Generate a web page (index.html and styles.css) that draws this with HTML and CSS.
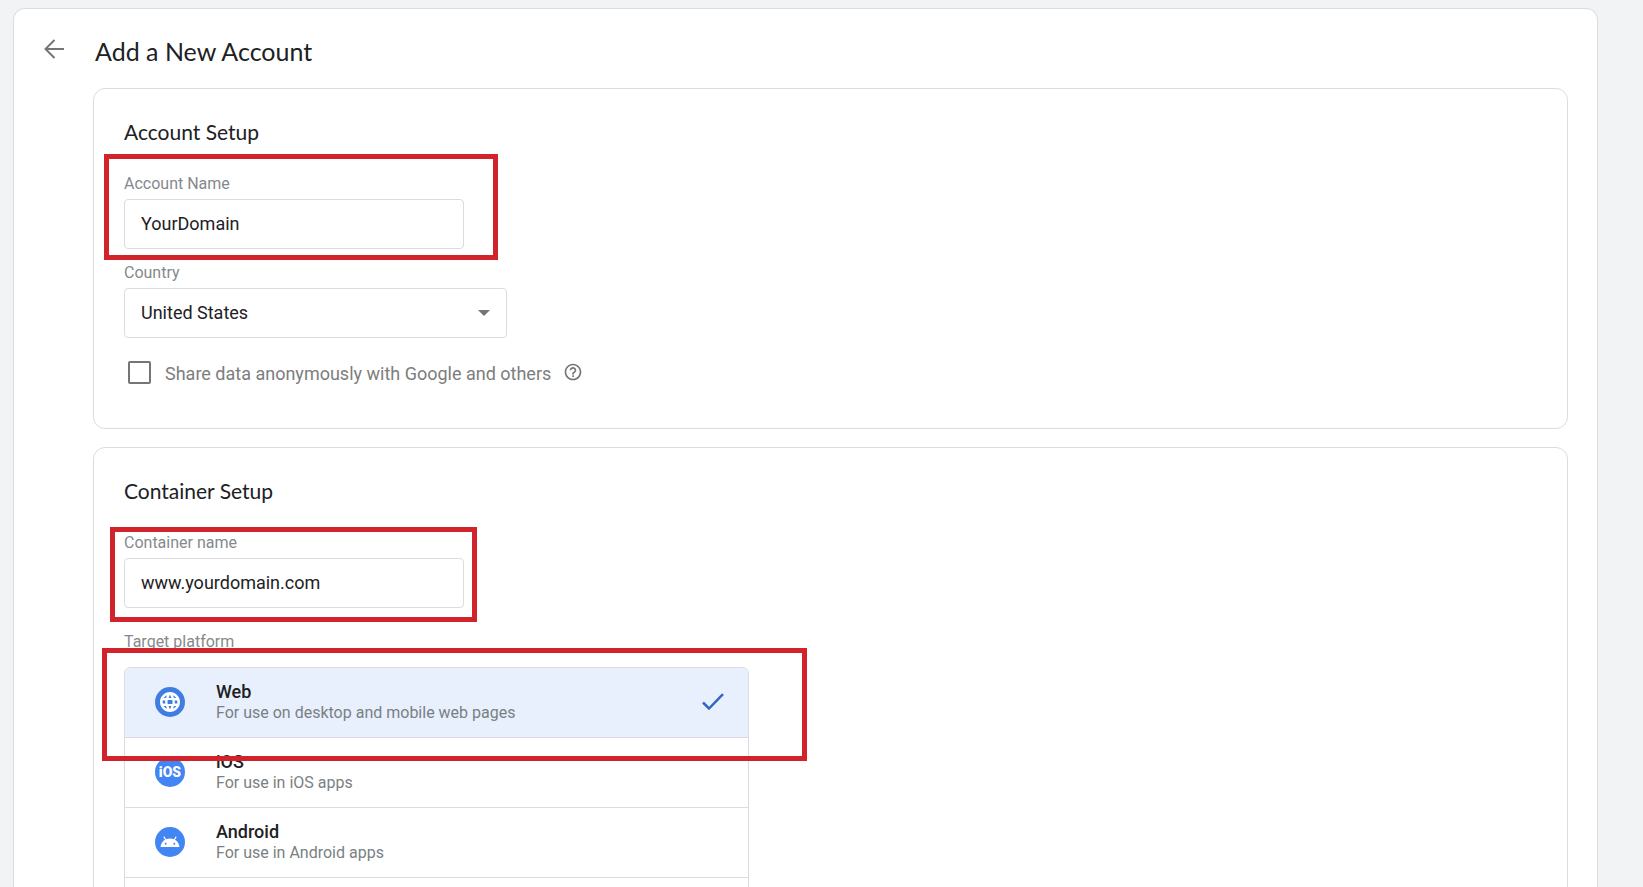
FILE: index.html
```html
<!DOCTYPE html>
<html lang="en">
<head>
  <meta charset="UTF-8">
  <meta name="viewport" content="width=device-width, initial-scale=1.0">
  <title>Add a New Account</title>
  <link rel="stylesheet" href="styles.css">
</head>
<body>
  <main class="panel">
    <header class="page-header">
      <button type="button" class="back-button" aria-label="Back">
        <svg width="20" height="20" viewBox="0 0 20 20" fill="none" stroke="currentColor" stroke-width="2">
          <path d="M20 10H2M10.5 1L1.5 10l9 9"/>
        </svg>
      </button>
      <h1>Add a New Account</h1>
    </header>
    <form class="cards">
      <section class="card">
        <h2>Account Setup</h2>
        <div class="field">
          <label for="account-name">Account Name</label>
          <input type="text" id="account-name" value="YourDomain">
          <span class="highlight highlight-account"></span>
        </div>
        <div class="field field-wide">
          <label for="country">Country</label>
          <div class="select-wrap">
            <select id="country">
              <option>United States</option>
            </select>
            <svg class="caret" width="12" height="6" viewBox="0 0 12 6"><path d="M0 0h12L6 6z" fill="currentColor"/></svg>
          </div>
        </div>
        <div class="share">
          <input type="checkbox" id="share-data">
          <label for="share-data">Share data anonymously with Google and others</label>
          <button type="button" class="help-button" aria-label="Help">
            <svg width="20" height="20" viewBox="0 0 24 24" fill="currentColor">
              <path d="M11 18h2v-2h-2v2zm1-16C6.48 2 2 6.48 2 12s4.480 10 10 10 10-4.480 10-10S17.520 2 12 2zm0 18c-4.410 0-8-3.590-8-8s3.590-8 8-8 8 3.590 8 8-3.590 8-8 8zm0-14c-2.210 0-4 1.790-4 4h2c0-1.100.9-2 2-2s2 .9 2 2c0 2-3 1.750-3 5h2c0-2.250 3-2.500 3-5 0-2.210-1.790-4-4-4z"/>
            </svg>
          </button>
        </div>
      </section>
      <section class="card">
        <h2>Container Setup</h2>
        <div class="field">
          <label for="container-name">Container name</label>
          <input type="text" id="container-name" value="www.yourdomain.com">
          <span class="highlight highlight-container"></span>
        </div>
        <div class="platforms">
          <p class="platforms-label" id="platform-label">Target platform</p>
          <div class="platform-list" role="group" aria-labelledby="platform-label">
            <button type="button" class="platform selected">
              <svg class="platform-icon" width="30" height="30" viewBox="0 0 30 30">
                <circle cx="15" cy="15" r="15" fill="#3f7de0"/>
                <path transform="translate(3 3)" fill="#fff" d="M11.990 2C6.470 2 2 6.480 2 12s4.470 10 9.990 10C17.520 22 22 17.520 22 12S17.520 2 11.990 2zm6.430 6h-2.450c-.32-1.250-.6-1.950-1.100-2.860 1.500.63 2.650 1.600 3.550 2.860zM12 4.840c.6 1 1 1.900 1.310 3.160h-2.620c.31-1.260.71-2.160 1.310-3.160zM4.860 13.600C4.700 13 4.700 12.600 4.700 12s0-1 .16-1.600h2.480c-.08.66-.14 1.000-.14 1.600s.06.94.14 1.600H4.860zm.72 2.400h2.450c.32 1.250.6 1.950 1.100 2.860-1.500-.63-2.650-1.600-3.550-2.860zm2.450-8H5.580c.9-1.260 2.050-2.230 3.550-2.860C8.630 6.050 8.350 6.750 8.030 8zM12 19.160c-.6-1-1-1.900-1.310-3.160h2.620c-.31 1.260-.71 2.160-1.310 3.160zM14.340 14H9.660c-.09-.66-.16-1.320-.16-2s.07-1.350.16-2h4.680c.09.65.16 1.320.16 2s-.07 1.340-.16 2zm.53 4.860c.5-.91.78-1.610 1.100-2.860h2.450c-.9 1.260-2.050 2.230-3.550 2.860zM16.660 13.600c.08-.66.14-1 .14-1.600s-.06-.94-.14-1.600h2.480c.16.6.16 1 .16 1.600s0 1-.16 1.600h-2.480z"/>
              </svg>
              <span class="platform-text">
                <strong>Web</strong>
                <span>For use on desktop and mobile web pages</span>
              </span>
              <svg class="check" width="22" height="17" viewBox="0 0 22 17" fill="none" stroke="currentColor" stroke-width="2.500">
                <path d="M1 9.500l6 6L21 1.200"/>
              </svg>
            </button>
            <button type="button" class="platform">
              <svg class="platform-icon" width="30" height="30" viewBox="0 0 30 30">
                <circle cx="15" cy="15" r="15" fill="#4285f4"/>
                <text class="ios-text" x="15" y="20" text-anchor="middle">iOS</text>
              </svg>
              <span class="platform-text">
                <strong>iOS</strong>
                <span>For use in iOS apps</span>
              </span>
            </button>
            <button type="button" class="platform">
              <svg class="platform-icon" width="30" height="30" viewBox="0 0 30 30">
                <circle cx="15" cy="15" r="15" fill="#4285f4"/>
                <path d="M5.500 20c.3-3.200 2-5.800 4.500-7.200L8.300 9.900l1-.6 1.800 3c2.500-1 5.300-1 7.800 0l1.800-3 1 .6-1.700 2.900c2.500 1.400 4.200 4 4.500 7.200z" fill="#fff"/>
                <circle cx="10.700" cy="16.800" r="1" fill="#4285f4"/>
                <circle cx="19.300" cy="16.800" r="1" fill="#4285f4"/>
              </svg>
              <span class="platform-text">
                <strong>Android</strong>
                <span>For use in Android apps</span>
              </span>
            </button>
          </div>
          <span class="highlight highlight-platform"></span>
        </div>
      </section>
    </form>
  </main>
</body>
</html>
```
FILE: styles.css
```css
* {
  margin: 0;
  padding: 0;
  box-sizing: border-box;
}
body {
  font-family: Roboto, Arial, sans-serif;
  background-color: #f1f3f4;
  color: #202124;
  height: 100vh;
  padding: 8px 45px 0 13px;
  overflow: hidden;
}
button {
  font-family: inherit;
  background: none;
  border: none;
  cursor: pointer;
}
.panel {
  background: #fff;
  border: 1px solid #dadce0;
  border-bottom: none;
  border-radius: 12px 12px 0 0;
  height: 100%;
  padding: 0 29px 0 30px;
  overflow: hidden;
}
.page-header {
  display: flex;
  align-items: center;
  gap: 31px;
  height: 79px;
}
.page-header h1 {
  font-family: Lato, Roboto, sans-serif;
  font-size: 25px;
  font-weight: 400;
  line-height: 32px;
  padding-top: 4px;
}
.back-button {
  display: flex;
  color: #757575;
}
.cards {
  display: flex;
  flex-direction: column;
  gap: 18px;
  margin-left: 49px;
}
.card {
  border: 1px solid #dadce0;
  border-radius: 12px;
  padding: 31px 30px 44px;
}
.card h2 {
  font-family: Lato, Roboto, sans-serif;
  font-size: 21px;
  font-weight: 400;
  line-height: 24px;
  margin-bottom: 30px;
}
.field {
  position: relative;
  width: 340px;
  max-width: 100%;
  margin-bottom: 14px;
}
.field-wide {
  width: 383px;
}
.field label,
.platforms-label {
  display: block;
  font-size: 16px;
  line-height: 20px;
  color: #85898d;
}
.field label {
  margin-bottom: 5px;
}
.field input,
.field select {
  display: block;
  width: 100%;
  height: 50px;
  padding: 0 16px 1px;
  border: 1px solid #dadce0;
  border-radius: 4px;
  background: #fff;
  color: #202124;
  font-family: inherit;
  font-size: 18px;
  appearance: none;
}
.select-wrap {
  position: relative;
}
.caret {
  position: absolute;
  top: 22px;
  right: 17px;
  color: #757575;
  pointer-events: none;
}
.share {
  display: flex;
  align-items: center;
  margin-top: 22px;
  padding-left: 4px;
  font-size: 18px;
  line-height: 24px;
  color: #7d7d7d;
}
.share label {
  margin: 2px 0 -2px;
}
.share input {
  appearance: none;
  width: 23px;
  height: 23px;
  margin-right: 14px;
  border: 2px solid #757575;
  border-radius: 2px;
}
.help-button {
  display: flex;
  margin-left: 12px;
  color: #757575;
}
.platforms {
  position: relative;
  width: 625px;
  max-width: 100%;
  padding-top: 10px;
}
.platforms-label {
  margin-bottom: 15px;
}
.platform-list {
  border: 1px solid #dadce0;
  border-radius: 6px 6px 0 0;
  padding-bottom: 70px;
  overflow: hidden;
}
.platform {
  display: flex;
  align-items: center;
  width: 100%;
  height: 70px;
  padding: 0 24px 2px 30px;
  border-bottom: 1px solid #dadce0;
  text-align: left;
  color: #202124;
}
.platform.selected {
  background: #e8f0fe;
}
.platform-icon {
  margin-right: 31px;
}
.platform-text {
  display: flex;
  flex-direction: column;
  flex: 1;
}
.platform-text strong {
  font-size: 18px;
  font-weight: 500;
  line-height: 21px;
}
.platform-text span {
  font-size: 16px;
  line-height: 21px;
  color: #7a7f84;
}
.ios-text {
  font-size: 14px;
  font-weight: 900;
  fill: #fff;
}
.check {
  color: #3367c0;
}
/* red frames drawn around the fields to fill in */
.highlight {
  position: absolute;
  border: 5px solid #d2232a;
  pointer-events: none;
}
.highlight-account {
  inset: -20px -34px -11px -20px;
}
.highlight-container {
  inset: -6px -13px -14px -14px;
}
.highlight-platform {
  top: 26px;
  left: -22px;
  right: -58px;
  height: 113px;
}
```
